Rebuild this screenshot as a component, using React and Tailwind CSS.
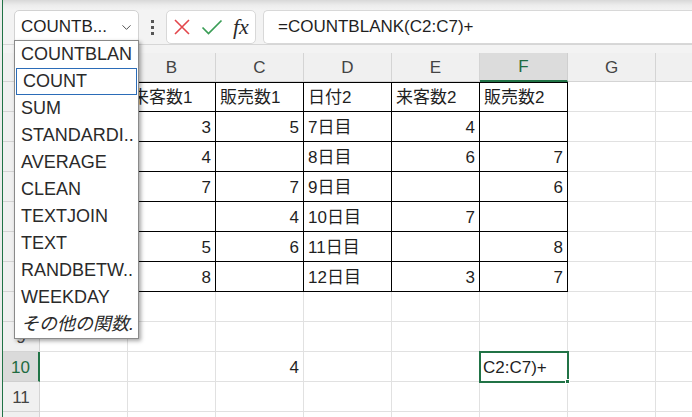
import React from "react";
import { ChevronDown } from "lucide-react";

const FONT = { fontFamily: "'Liberation Sans', 'Noto Sans CJK JP', sans-serif" };

const COLS = ["A", "B", "C", "D", "E", "F", "G", "H"];

// table A1:F7
const TABLE = [
    ["日付1", "来客数1", "販売数1", "日付2", "来客数2", "販売数2"],
    ["1日目", "3", "5", "7日目", "4", ""],
    ["2日目", "4", "", "8日目", "6", "7"],
    ["3日目", "7", "7", "9日目", "", "6"],
    ["4日目", "", "4", "10日目", "7", ""],
    ["5日目", "5", "6", "11日目", "", "8"],
    ["6日目", "8", "", "12日目", "3", "7"],
];

const MENU = [
    "COUNTBLAN",
    "COUNT",
    "SUM",
    "STANDARDI..",
    "AVERAGE",
    "CLEAN",
    "TEXTJOIN",
    "TEXT",
    "RANDBETW..",
    "WEEKDAY",
    "その他の関数.",
];

function Cell({ value, inTable, topEdge }) {
    const isNum = value !== "" && !isNaN(Number(value));
    return (
        <div
            className={
                "w-[88px] h-[30px] shrink-0 border-r border-b flex items-center pt-[2px] text-[17px] text-[#1f1f1f] " +
                (inTable ? "border-black " : "border-[#e1e1e1] ") +
                (topEdge ? "shadow-[inset_0_1px_0_#000] " : "") +
                (isNum ? "justify-end pr-[4px]" : "justify-start pl-[4px]")
            }
        >
            {value}
        </div>
    );
}

function RowHeader({ n, active }) {
    return (
        <div
            className={
                "w-[37px] h-[30px] shrink-0 border-b flex items-center justify-center text-[17px] pt-[2px] " +
                (active
                    ? "bg-[#dadada] border-b-[#cfcfcf] border-r-2 border-r-[#217346] text-[#1e6b41]"
                    : "bg-[#f0f0f0] border-[#d4d4d4] border-r text-[#444]")
            }
        >
            {n}
        </div>
    );
}

export default function App() {
    const rows = [];
    for (let r = 1; r <= 12; r++) {
        const cells = [];
        for (let c = 0; c < COLS.length; c++) {
            const inTable = r <= 7 && c <= 5;
            let value = inTable ? TABLE[r - 1][c] : "";
            if (r === 10 && c === 2) value = "4";
            if (r === 10 && c === 5) {
                cells.push(
                    <div key={c} className="relative w-[88px] h-[30px] shrink-0 border-r border-b border-[#e1e1e1]">
                        <div className="absolute -top-px -left-px w-[90px] h-[32px] border-2 border-[#217346] flex items-center pl-[2px] pt-[2px] text-[17px] text-[#1f1f1f]">
                            C2:C7)+
                        </div>
                        <div className="absolute -right-[3px] -bottom-[3px] w-[5px] h-[5px] bg-[#217346] border border-white" />
                    </div>
                );
                continue;
            }
            cells.push(<Cell key={c} value={value} inTable={inTable} topEdge={r === 1 && c <= 5} />);
        }
        rows.push(
            <div key={r} className="flex">
                <RowHeader n={r} active={r === 10} />
                {cells}
            </div>
        );
    }

    return (
        <div style={FONT} className="relative w-[692px] h-[417px] overflow-hidden bg-[#f3f3f3] flex">
            <div className="w-[2px] shrink-0 bg-[#ececec]" />
            <div className="w-px shrink-0 bg-[#217346]" />
            <div className="flex-1 flex flex-col min-w-0">
                <div className="h-[10px] shrink-0 bg-gradient-to-b from-[#d8d8d8] via-[#ececec] to-[#f3f3f3]" />

                {/* formula bar */}
                <div className="h-[35px] shrink-0 flex items-start pl-[11px] border-b border-[#d6d6d6]">
                    <div className="w-[125px] h-[34px] bg-white border border-[#d2d2d2] rounded-[5px] flex items-center justify-between pl-[6px] pr-[4px] text-[17px] text-[#1f1f1f]">
                        <span>COUNTB...</span>
                        <ChevronDown size={15} strokeWidth={1.5} className="text-[#444]" />
                    </div>
                    <div className="w-[27px] h-[34px] flex flex-col items-center justify-center gap-[3px]">
                        <div className="w-[3px] h-[3px] bg-[#555]" />
                        <div className="w-[3px] h-[3px] bg-[#555]" />
                        <div className="w-[3px] h-[3px] bg-[#555]" />
                    </div>
                    <div className="w-[90px] h-[34px] bg-white border border-[#d8d8d8] rounded-[5px] flex items-center pl-[6px] gap-[10px]">
                        <svg width="18" height="18" viewBox="0 0 18 18">
                            <path d="M2 2 L16 16 M16 2 L2 16" stroke="#e3474c" strokeWidth="1.6" fill="none" />
                        </svg>
                        <svg width="22" height="18" viewBox="0 0 22 18">
                            <path d="M1.5 9.5 L7.5 15.5 L20.5 2.5" stroke="#3a9d56" strokeWidth="1.7" fill="none" />
                        </svg>
                        <span
                            style={{ fontFamily: "'Liberation Serif', serif" }}
                            className="italic text-[22px] text-[#2a2a2a] leading-none"
                        >
                            fx
                        </span>
                    </div>
                    <div className="ml-[7px] flex-1 h-[34px] bg-white border border-[#d8d8d8] border-r-0 rounded-l-[5px] flex items-center pl-[14px] text-[17px] text-[#1f1f1f]">
                        =COUNTBLANK(C2:C7)+
                    </div>
                </div>

                <div className="h-[8px] shrink-0" />

                {/* column headers */}
                <div className="flex h-[29px] shrink-0">
                    <div className="w-[37px] shrink-0 bg-[#f0f0f0] border-r border-b border-[#d4d4d4]" />
                    {COLS.map((c) => (
                        <div
                            key={c}
                            className={
                                "w-[88px] shrink-0 flex items-center justify-center text-[17px] pt-[1px] " +
                                (c === "F"
                                    ? "bg-[#dcdcdc] border-r border-r-[#cfcfcf] border-b-2 border-b-[#217346] text-[#1e6b41]"
                                    : "bg-[#f0f0f0] border-r border-b border-[#d4d4d4] text-[#444]")
                            }
                        >
                            {c}
                        </div>
                    ))}
                </div>

                <div className="bg-white">{rows}</div>
            </div>

            {/* function dropdown */}
            <div className="absolute left-[14px] top-[40px] w-[125px] bg-white border border-[#8a8a8a] shadow-[2px_2px_4px_rgba(0,0,0,0.35)]">
                {MENU.map((m, i) => (
                    <div
                        key={m}
                        className={
                            "h-[27px] flex items-center pl-[6px] text-[18px] text-[#2a2a2a] whitespace-nowrap overflow-hidden " +
                            (i === 1 ? "mx-px border border-[#2b6cb8] pl-[5px]" : "") +
                            (i === MENU.length - 1 ? " italic" : "")
                        }
                    >
                        {m}
                    </div>
                ))}
            </div>
        </div>
    );
}
